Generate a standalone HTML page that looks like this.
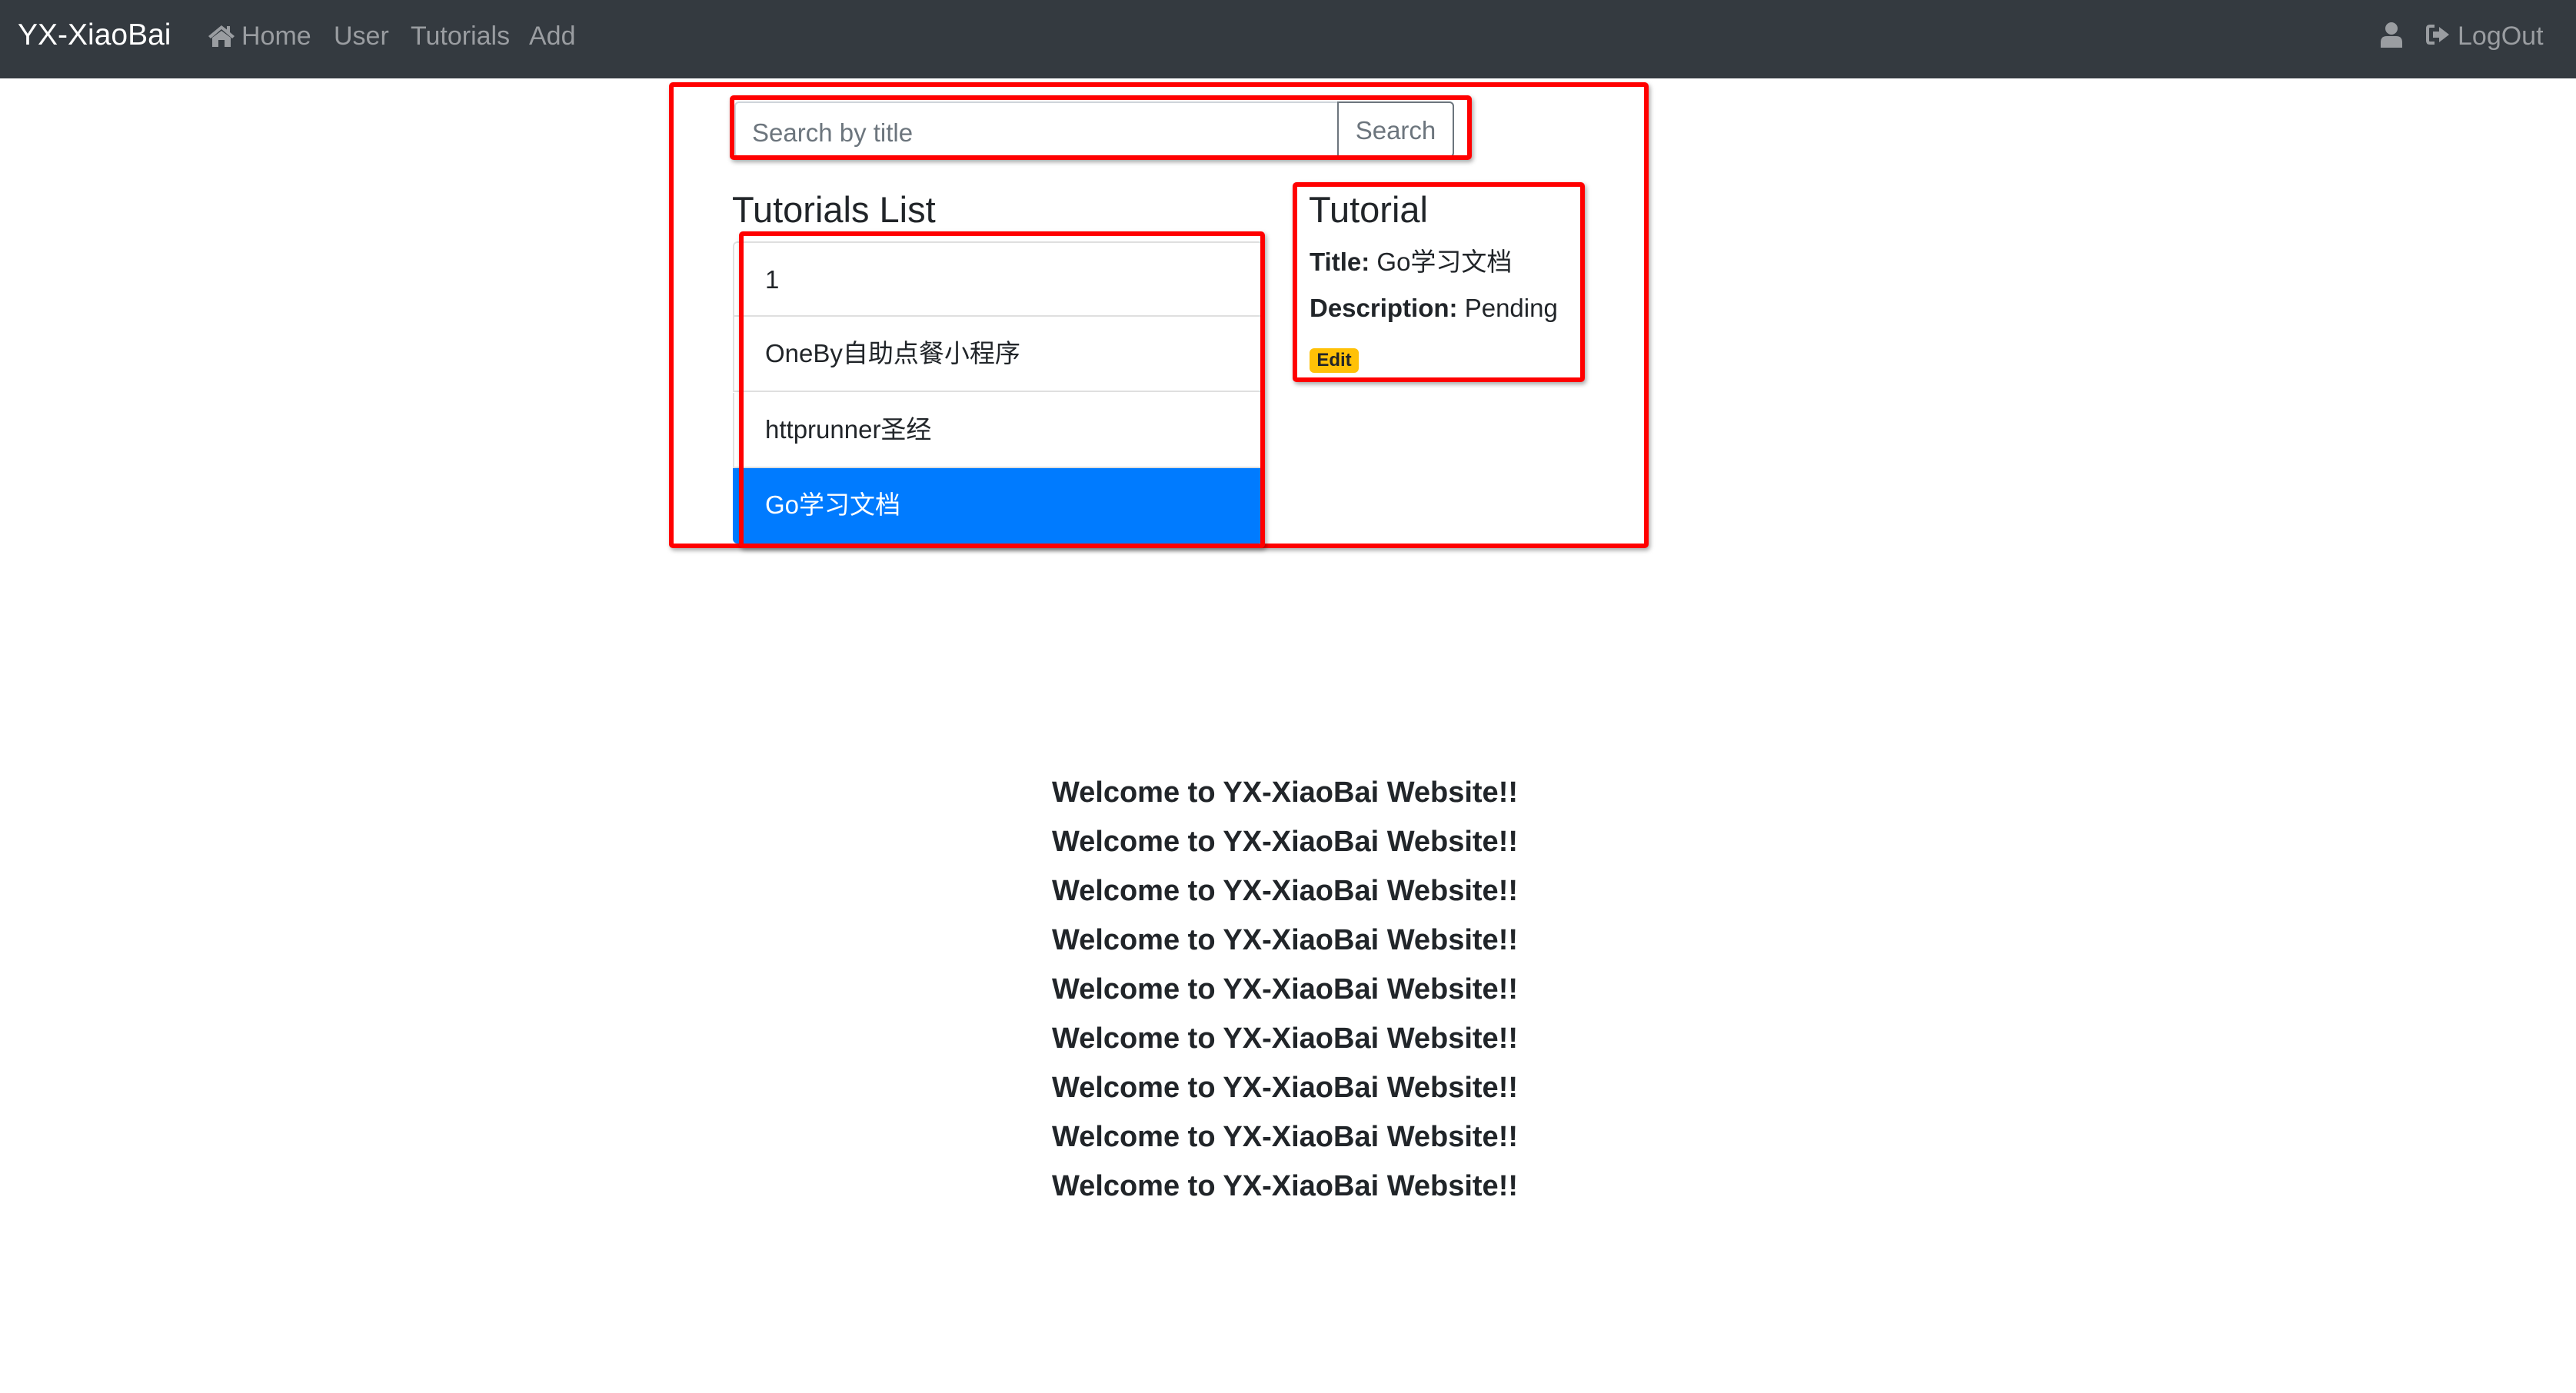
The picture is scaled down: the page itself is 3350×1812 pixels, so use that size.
<!DOCTYPE html>
<html><head><meta charset="utf-8"><style>
*{margin:0;padding:0;box-sizing:border-box}
body{width:3350px;height:1812px;background:#fff;font-family:"Liberation Sans","Noto Sans CJK SC",sans-serif;color:#212529;position:relative;overflow:hidden}
.a{position:absolute;white-space:nowrap}
.nav{position:absolute;left:0;top:0;width:3350px;height:102px;background:#343a40}
.nl{color:#9a9da1;font-size:34px;top:28px}
.rb{position:absolute;border:6px solid #f00;border-radius:5px;box-shadow:2px 3px 6px rgba(0,0,0,.35)}
.item{position:absolute;left:953px;width:690px;height:98px;border:2px solid #dfdfdf;border-top:none;font-size:33px;padding:0 0 0 40px;line-height:96px}
.w{left:0;width:3342px;text-align:center;font-size:38px;font-weight:bold}
</style></head><body>
<div class="nav"></div>
<div class="a" style="left:23px;top:24px;font-size:39px;color:#fff">YX-XiaoBai</div>
<svg class="a" style="left:269px;top:30px" width="38" height="32" viewBox="0 0 38 32"><path d="M19 3 L2 17 L5 20 L19 8 L33 20 L36 17 L30 12 V4 H26 V8.5Z" fill="#9a9da1"/><path d="M7 19 L19 10 L31 19 V31 H23 V22 H15 V31 H7Z" fill="#9a9da1"/></svg>
<div class="a nl" style="left:314px">Home</div>
<div class="a nl" style="left:434px">User</div>
<div class="a nl" style="left:534px">Tutorials</div>
<div class="a nl" style="left:688px">Add</div>
<svg class="a" style="left:3096px;top:29px" width="28" height="33" viewBox="0 0 28 33"><circle cx="14" cy="8" r="8" fill="#9a9da1"/><path d="M0 33 V26 Q0 18 8 18 H20 Q28 18 28 26 V33Z" fill="#9a9da1"/></svg>
<svg class="a" style="left:3155px;top:31px" width="32" height="28" viewBox="0 0 32 28"><path d="M11 3 H5 Q2 3 2 6 V22 Q2 25 5 25 H11" stroke="#9a9da1" stroke-width="4" fill="none"/><path d="M9 10 H17 V4 L30 14 L17 24 V18 H9Z" fill="#9a9da1"/></svg>
<div class="a nl" style="left:3196px">LogOut</div>

<div class="rb" style="left:870px;top:107px;width:1274px;height:606px"></div>
<div class="a" style="left:955px;top:132px;width:936px;height:73px;border:2px solid #ced4da;border-radius:6px"></div>
<div class="a" style="left:1739px;top:132px;width:152px;height:73px;border:2px solid #6c757d;border-radius:0 6px 6px 0;color:#6c757d;font-size:33px;line-height:71px;text-align:center">Search</div>
<div class="a" style="left:978px;top:154px;font-size:33px;color:#6c757d">Search by title</div>
<div class="rb" style="left:949px;top:124px;width:965px;height:84px"></div>

<div class="a" style="left:952px;top:245px;font-size:47px">Tutorials List</div>
<div class="item" style="top:314px;border-top:2px solid #dfdfdf;border-radius:6px 6px 0 0">1</div>
<div class="item" style="top:412px">OneBy自助点餐小程序</div>
<div class="item" style="top:511px">httprunner圣经</div>
<div class="item" style="top:609px;background:#007bff;border-color:#007bff;color:#fff;border-radius:0 0 6px 6px">Go学习文档</div>
<div class="rb" style="left:961px;top:301px;width:684px;height:412px"></div>

<div class="a" style="left:1702px;top:245px;font-size:47px">Tutorial</div>
<div class="a" style="left:1703px;top:314px;font-size:33px"><b>Title:</b> Go学习文档</div>
<div class="a" style="left:1703px;top:382px;font-size:33px"><b>Description:</b> Pending</div>
<div class="a" style="left:1703px;top:453px;width:64px;height:32px;background:#ffc107;border-radius:6px;font-size:24px;font-weight:bold;text-align:center;line-height:32px">Edit</div>
<div class="rb" style="left:1681px;top:237px;width:380px;height:260px"></div>

<div class="a w" style="top:1010px">Welcome to YX-XiaoBai Website!!</div>
<div class="a w" style="top:1074px">Welcome to YX-XiaoBai Website!!</div>
<div class="a w" style="top:1138px">Welcome to YX-XiaoBai Website!!</div>
<div class="a w" style="top:1202px">Welcome to YX-XiaoBai Website!!</div>
<div class="a w" style="top:1266px">Welcome to YX-XiaoBai Website!!</div>
<div class="a w" style="top:1330px">Welcome to YX-XiaoBai Website!!</div>
<div class="a w" style="top:1394px">Welcome to YX-XiaoBai Website!!</div>
<div class="a w" style="top:1458px">Welcome to YX-XiaoBai Website!!</div>
<div class="a w" style="top:1522px">Welcome to YX-XiaoBai Website!!</div>
</body></html>
